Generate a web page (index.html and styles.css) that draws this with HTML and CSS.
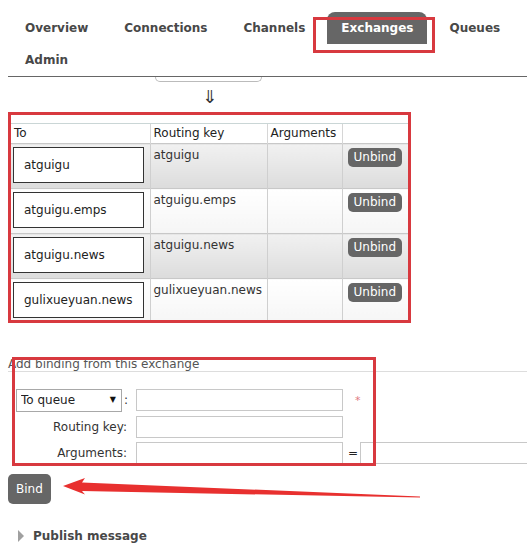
FILE: index.html
```html
<!DOCTYPE html>
<html>
<head>
<meta charset="utf-8">
<title>Exchange</title>
<link rel="stylesheet" href="styles.css">
</head>
<body>
<div class="header">
  <ul class="nav">
    <li><a>Overview</a></li>
    <li><a>Connections</a></li>
    <li><a>Channels</a></li>
    <li class="active"><a>Exchanges</a></li>
    <li><a>Queues</a></li>
    <li><a>Admin</a></li>
  </ul>
  <div class="mark nav-mark"></div>
</div>
<div class="stub"></div>

<div class="bindings">
  <div class="down">&#8659;</div>
  <table class="list">
    <colgroup>
      <col class="c1"><col class="c2"><col class="c3"><col class="c4">
    </colgroup>
    <thead>
      <tr><th>To</th><th>Routing key</th><th>Arguments</th><th></th></tr>
    </thead>
    <tbody>
      <tr class="alt1">
        <td class="to"><div class="qbox">atguigu</div></td>
        <td>atguigu</td><td></td>
        <td class="act"><button class="btn unbind">Unbind</button></td>
      </tr>
      <tr class="alt2">
        <td class="to"><div class="qbox">atguigu.emps</div></td>
        <td>atguigu.emps</td><td></td>
        <td class="act"><button class="btn unbind">Unbind</button></td>
      </tr>
      <tr class="alt1">
        <td class="to"><div class="qbox">atguigu.news</div></td>
        <td>atguigu.news</td><td></td>
        <td class="act"><button class="btn unbind">Unbind</button></td>
      </tr>
      <tr class="alt2">
        <td class="to"><div class="qbox">gulixueyuan.news</div></td>
        <td>gulixueyuan.news</td><td></td>
        <td class="act"><button class="btn unbind">Unbind</button></td>
      </tr>
    </tbody>
  </table>
  <div class="mark table-mark"></div>
</div>

<div class="add-binding">
  <h3 class="sect">Add binding from this exchange</h3>
  <div class="form">
    <div class="cell-sel">
      <span class="selwrap">
        <select class="sel"><option>To queue</option><option>To exchange</option></select>
        <span class="caret">&#9660;</span>
      </span>
      <span class="colon">:</span>
    </div>
    <input class="field" type="text">
    <span class="req">*</span>

    <label class="lbl">Routing key:</label>
    <input class="field" type="text">
    <span></span>

    <label class="lbl">Arguments:</label>
    <input class="field" type="text">
    <span class="argval"><span class="eq">=</span><input class="field wide" type="text"></span>
  </div>
  <div class="mark form-mark"></div>
</div>

<div class="bind-row">
  <button class="btn bind">Bind</button>
  <svg class="arrow" width="440" height="32" viewBox="0 0 440 32">
    <polygon points="63,12 85,4 82,8.6 420,22.4 420,23.6 82,17 85,20.5" fill="#e8302f"/>
  </svg>
</div>

<div class="publish"><span class="tri"></span>Publish message</div>
</body>
</html>
```

FILE: styles.css
```css
html, body {
  margin: 0;
  padding: 0;
  overflow: hidden;
  background: #fff;
}
body {
  font-family: "DejaVu Sans", Verdana, sans-serif;
  font-size: 12px;
  color: #333;
  width: 527px;
  height: 549px;
}

/* ---------- nav ---------- */
.header {
  position: relative;
  margin-left: 8px;
  padding-top: 12px;
  border-bottom: 1px solid #666;
}
.nav {
  list-style: none;
  margin: 0;
  padding: 0 0 0 3px;
  display: flex;
  flex-wrap: wrap;
}
.nav li {
  margin-right: 8px;
}
.nav a {
  display: block;
  padding: 1px 14px 0;
  line-height: 31px;
  font-weight: bold;
  color: #484848;
}
.nav li.active a {
  background: #666;
  color: #fff;
  border-radius: 8px 8px 0 0;
}

.mark {
  position: absolute;
  border: 3px solid #d8393f;
  box-sizing: border-box;
  pointer-events: none;
}
.nav-mark {
  left: 305px;
  top: 17px;
  width: 122px;
  height: 36px;
}

.stub {
  margin-left: 155px;
  width: 107px;
  height: 5px;
  box-sizing: border-box;
  border: 1px solid #bbb;
  border-top: 0;
  border-radius: 0 0 5px 5px;
}

/* ---------- bindings table ---------- */
.bindings {
  position: relative;
}
.down {
  width: 397px;
  margin-left: 11px;
  text-align: center;
  font-size: 18px;
  line-height: 20px;
  padding-top: 5px;
  margin-bottom: 16px;
  color: #333;
}
.list {
  margin-left: 11px;
  width: 397px;
  border-collapse: collapse;
  table-layout: fixed;
}
.c1 { width: 139px; }
.c2 { width: 117px; }
.c3 { width: 75px; }
.c4 { width: 66px; }
.list th {
  text-align: left;
  font-weight: normal;
  color: #222;
  padding: 2px 3px;
  height: 15px;
  line-height: 15px;
  border-top: 1px solid #cad6d6;
  border-left: 1px solid #d6d6d6;
  background: #fff;
}
.list th:first-child {
  border-left: 0;
}
.list td {
  padding: 4px 3px;
  vertical-align: top;
  line-height: 15px;
  color: #333;
  border-top: 1px solid #c8c8c8;
  border-left: 1px solid #cfcfcf;
}
.list td:first-child {
  border-left: 0;
}
.list tr.alt1 td {
  background: linear-gradient(#f1f1f1, #dcdcdc);
}
.list tr.alt2 td {
  background: linear-gradient(#ffffff, #f5f5f5);
}
.list td.to {
  padding: 3px 6px 5px 2px;
}
.qbox {
  height: 36px;
  box-sizing: border-box;
  border: 1px solid #333;
  background: #fff;
  padding-left: 10px;
  display: flex;
  align-items: center;
  color: #222;
  white-space: nowrap;
}
.list td.act {
  padding: 4px 5px;
}
.table-mark {
  left: 8px;
  top: 30px;
  width: 403px;
  height: 211px;
}

/* ---------- buttons ---------- */
.btn {
  background: #666;
  color: #fff;
  border: 0;
  border-radius: 5px;
  font-family: "DejaVu Sans", Verdana, sans-serif;
  font-size: 12px;
  margin: 0;
  display: block;
}
.unbind {
  height: 19px;
  line-height: 19px;
  padding: 0 6px;
}
.bind {
  height: 30px;
  padding: 0 8px;
}

/* ---------- add binding ---------- */
.add-binding {
  position: relative;
}
.sect {
  margin: 34px 0 0 8px;
  font-size: 12px;
  font-weight: normal;
  color: #555;
  line-height: 14px;
  border-bottom: 1px solid #ddd;
}
.form {
  display: grid;
  grid-template-columns: 128px 207px 184px;
  grid-auto-rows: 22px;
  row-gap: 4.5px;
  margin: 17px 0 0 8px;
  align-items: center;
}
.cell-sel {
  display: flex;
  align-items: center;
  padding-left: 8px;
}
.selwrap {
  position: relative;
  display: block;
}
.sel {
  -webkit-appearance: none;
  appearance: none;
  width: 106px;
  height: 23px;
  box-sizing: border-box;
  border: 1px solid #a8a8a8;
  border-radius: 0;
  background: #fff;
  font-family: "DejaVu Sans", Verdana, sans-serif;
  font-size: 12px;
  color: #222;
  padding: 0 0 0 4px;
  margin: 0;
  display: block;
}
.caret {
  position: absolute;
  right: 6px;
  top: 6px;
  font-size: 8px;
  line-height: 10px;
  color: #111;
}
.colon {
  margin-left: 2px;
  color: #333;
}
.lbl {
  text-align: right;
  padding-right: 9px;
  color: #333;
}
.field {
  width: 207px;
  height: 22px;
  box-sizing: border-box;
  border: 1px solid #c8c8c8;
  margin: 0;
  padding: 0 3px;
  background: #fff;
  display: block;
}
.req {
  margin-left: 12px;
  color: #e07a80;
  font-size: 11px;
}
.argval {
  display: flex;
  align-items: center;
  overflow: hidden;
}
.eq {
  flex: none;
  margin-left: 5px;
  width: 12px;
  color: #222;
}
.field.wide {
  flex: none;
  width: 220px;
  border-right: 0;
}
.form-mark {
  left: 12px;
  top: 0;
  width: 364px;
  height: 109px;
}

/* ---------- bind row ---------- */
.bind-row {
  position: relative;
  margin: 10px 0 0 8px;
}
.arrow {
  position: absolute;
  left: -8px;
  top: 0;
}

/* ---------- publish ---------- */
.publish {
  margin: 24px 0 0 18px;
  display: flex;
  align-items: center;
  font-weight: bold;
  color: #484848;
  line-height: 16px;
}
.tri {
  width: 0;
  height: 0;
  border-left: 6px solid #a0a0a0;
  border-top: 6px solid transparent;
  border-bottom: 6px solid transparent;
  margin-right: 9px;
}
```
